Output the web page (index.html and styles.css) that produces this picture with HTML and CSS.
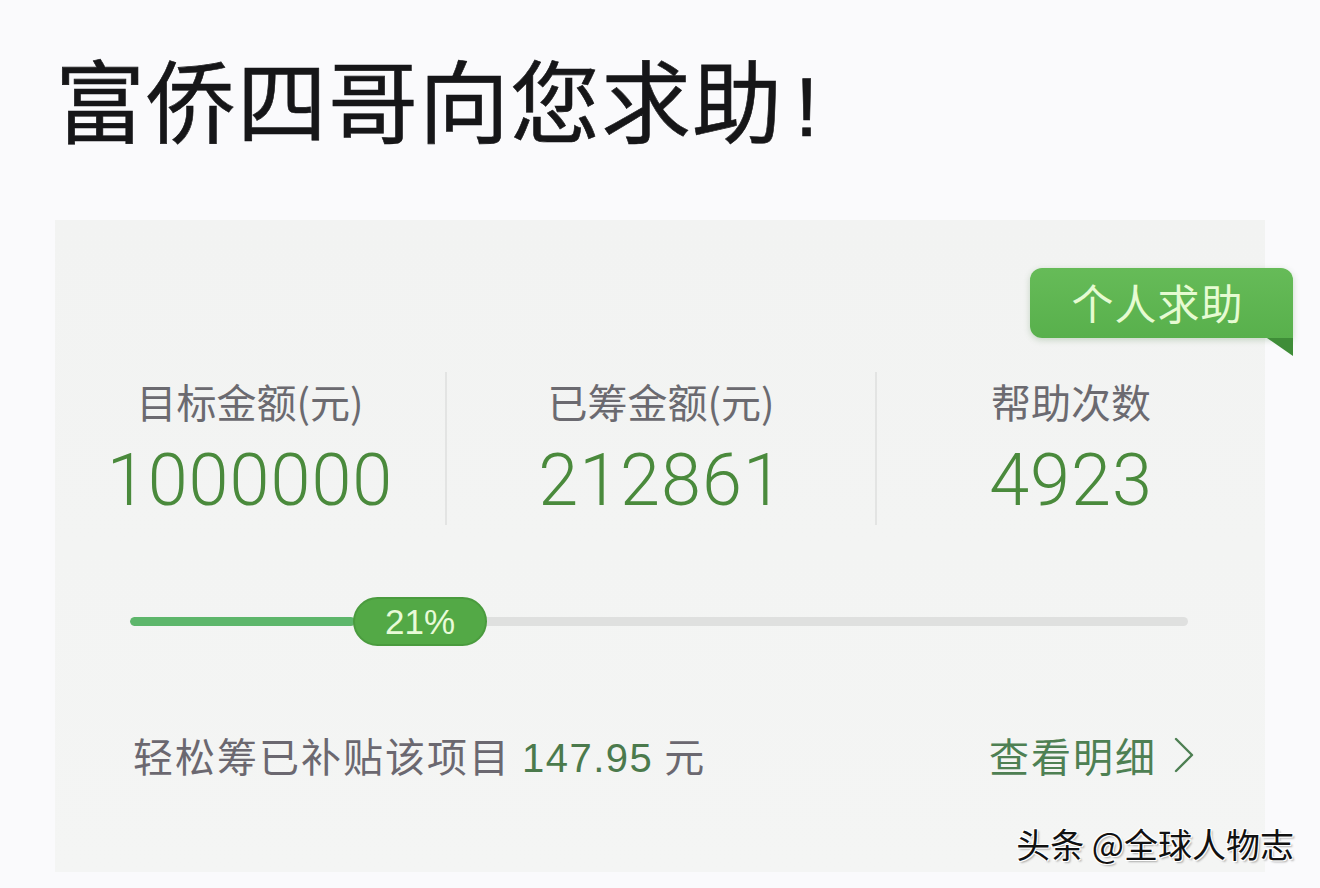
FILE: index.html
```html
<!DOCTYPE html>
<html lang="zh-CN">
<head>
<meta charset="utf-8">
<title>富侨四哥向您求助</title>
<link rel="stylesheet" href="styles.css">
</head>
<body>
<div class="page">
  <h1 class="title">富侨四哥向您求助<span class="bang">!</span></h1>
  <section class="card">
    <div class="badge">个人求助<span class="fold"></span></div>
    <div class="stats">
      <div class="stat">
        <div class="label">目标金额(元)</div>
        <div class="num">1000000</div>
      </div>
      <div class="stat">
        <div class="label">已筹金额(元)</div>
        <div class="num">212861</div>
      </div>
      <div class="stat">
        <div class="label">帮助次数</div>
        <div class="num">4923</div>
      </div>
    </div>
    <div class="progress">
      <div class="track">
        <div class="fill" style="width: 21.3%"></div>
      </div>
      <div class="pill">21%</div>
    </div>
    <div class="footer">
      <div class="subsidy">轻松筹已补贴该项目 <span class="amt">147.95</span> 元</div>
      <div class="detail">查看明细
        <svg class="chev" width="22" height="38" viewBox="0 0 22 38"><path d="M3 3 L19 19 L3 35" fill="none" stroke="#4d7f52" stroke-width="2.4" stroke-linecap="round" stroke-linejoin="round"/></svg>
      </div>
    </div>
  </section>
  <div class="watermark">头条 @全球人物志</div>
</div>
</body>
</html>
```

FILE: styles.css
```css
* { box-sizing: border-box; }
html, body {
  margin: 0;
  padding: 0;
  background: #fafafc;
  font-family: "Noto Sans CJK SC", "Liberation Sans", sans-serif;
}
.page {
  position: relative;
  width: 1320px;
  height: 888px;
  overflow: hidden;
  padding-top: 47px;
}
.title {
  margin: 0 0 0 55px;
  height: 100px;
  font-size: 90px;
  line-height: 100px;
  font-weight: 400;
  color: #161618;
  letter-spacing: 1px;
  -webkit-text-stroke: 0.6px #161618;
}
.bang {
  margin-left: 12px;
  font-family: "Liberation Sans", sans-serif;
  font-weight: 400;
  font-size: 84px;
  line-height: 1;
}
.card {
  position: relative;
  margin: 73px 0 0 55px;
  width: 1210px;
  height: 652px;
  background: linear-gradient(180deg, #f2f3f2 0%, #f4f5f4 100%);
  padding-top: 152px;
}
.badge {
  position: absolute;
  top: 48px;
  right: -28px;
  width: 263px;
  height: 70px;
  border-radius: 12px 12px 0 12px;
  background: linear-gradient(180deg, #66bb58 0%, #58b04c 100%);
  color: #e6fbd2;
  font-size: 42px;
  line-height: 68px;
  text-align: center;
  letter-spacing: 1px;
  padding-right: 8px;
  box-shadow: 0 2px 6px rgba(60, 120, 50, 0.25);
}
.fold {
  position: absolute;
  right: 0;
  bottom: -18px;
  width: 0;
  height: 0;
  border-top: 18px solid #3f8d38;
  border-left: 26px solid transparent;
}
.stats {
  display: grid;
  grid-template-columns: 390px 430px 390px;
  height: 153px;
}
.stat {
  display: flex;
  flex-direction: column;
  align-items: center;
  padding-top: 2px;
}
.stat + .stat { border-left: 2px solid #e3e4e3; }
.label {
  font-size: 40px;
  line-height: 54px;
  color: #6b6a70;
  font-weight: 400;
}
.num {
  margin-top: 13px;
  font-family: Roboto, "Liberation Sans", sans-serif;
  font-weight: 300;
  font-size: 72px;
  line-height: 80px;
  color: #4a8a3c;
  letter-spacing: 1px;
}
.progress {
  position: relative;
  margin: 72px 0 0 75px;
  width: 1058px;
  height: 49px;
  display: flex;
  align-items: center;
}
.track {
  width: 100%;
  height: 9px;
  border-radius: 5px;
  background: #dfe0df;
  overflow: hidden;
}
.fill {
  height: 100%;
  background: #5db66b;
  border-radius: 5px;
}
.pill {
  position: absolute;
  left: 223px;
  top: 0;
  width: 134px;
  height: 49px;
  border-radius: 25px;
  background: #53a946;
  border: 2px solid #4a9b3e;
  color: #e8fbd8;
  font-family: "Liberation Sans", sans-serif;
  font-size: 35px;
  line-height: 45px;
  text-align: center;
}
.footer {
  margin: 84px 70px 0 78px;
  display: flex;
  justify-content: space-between;
  align-items: center;
  height: 50px;
}
.subsidy {
  font-size: 40px;
  color: #6b6870;
  letter-spacing: 2px;
}
.amt {
  font-family: "Liberation Sans", sans-serif;
  color: #4b7a4c;
  letter-spacing: 1.5px;
}
.detail {
  display: flex;
  align-items: center;
  gap: 16px;
  font-size: 40px;
  color: #4e8053;
  letter-spacing: 2px;
}
.watermark {
  position: absolute;
  right: 26px;
  bottom: 24px;
  font-size: 34px;
  line-height: 40px;
  color: #111;
  text-shadow: 1px 1px 0 #fff, -1px -1px 0 #fff, 1px -1px 0 #fff, -1px 1px 0 #fff, 2px 2px 2px rgba(0,0,0,0.3);
}
```
